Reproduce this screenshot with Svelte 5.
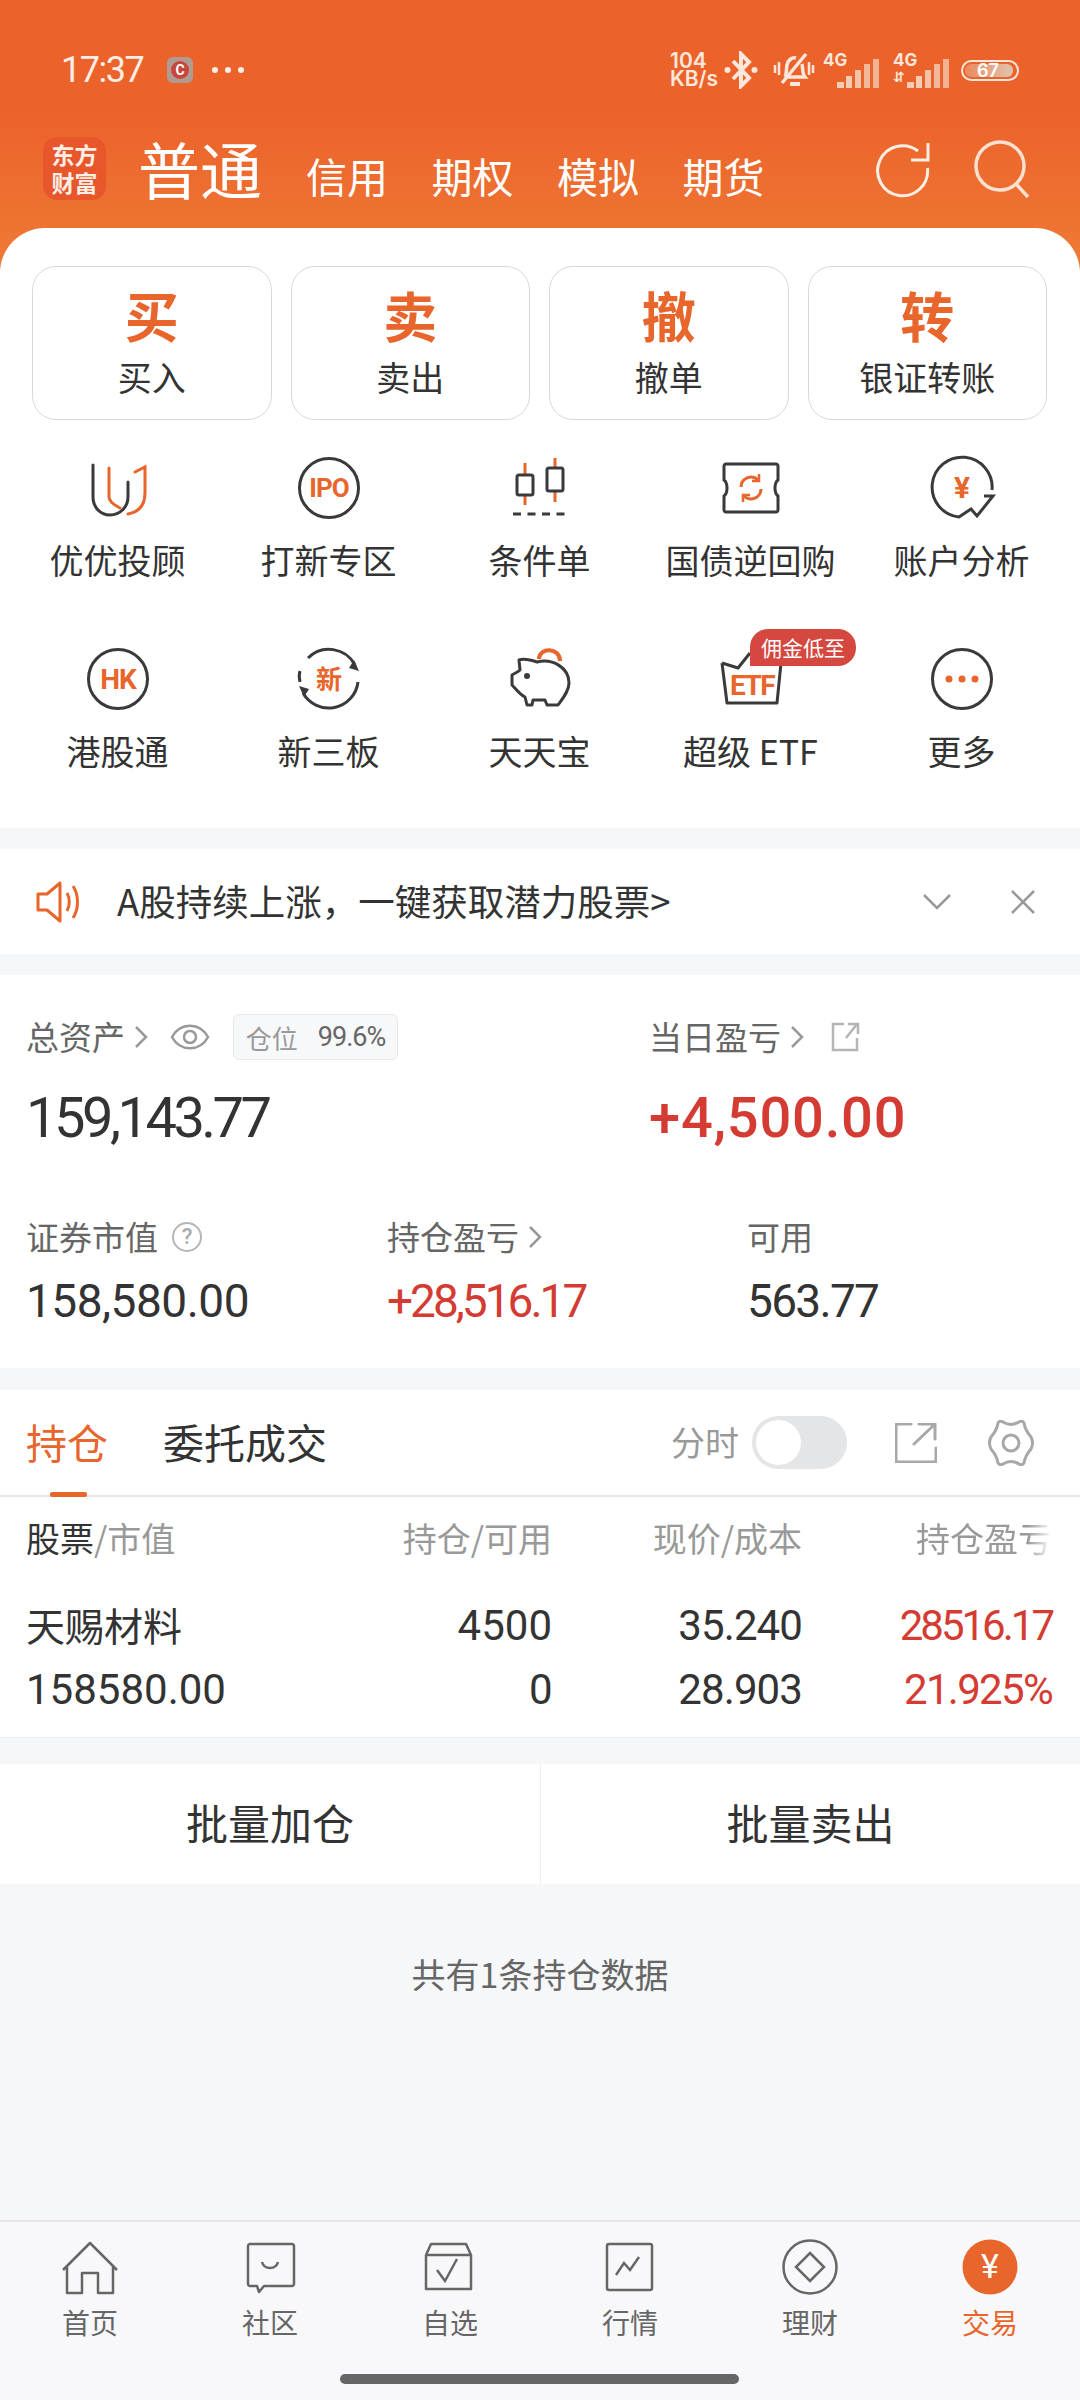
<script>
    const trades = [
        { char: "买", label: "买入" },
        { char: "卖", label: "卖出" },
        { char: "撤", label: "撤单" },
        { char: "转", label: "银证转账" },
    ];
    const tabs = ["信用", "期权", "模拟", "期货"];
    const navs = ["首页", "社区", "自选", "行情", "理财", "交易"];
</script>

<div class="page">
    <div class="top">
        <div class="status">
            <span class="time">17:37</span>
            <span class="app-c"><span>C</span></span>
            <span class="dots"><i></i><i></i><i></i></span>
            <span class="spacer"></span>
            <span class="speed">104<br />KB/s</span>
            <svg class="st-bt" width="34" height="38" viewBox="0 0 34 38" fill="none" stroke="#fde6da" stroke-width="4">
                <path d="M9 10 25 27 17 35V3l8 8L9 28" />
                <circle cx="3.5" cy="19" r="3" fill="#fde6da" stroke="none" />
                <circle cx="30.5" cy="19" r="3" fill="#fde6da" stroke="none" />
            </svg>
            <svg class="st-bell" width="42" height="38" viewBox="0 0 42 38" fill="none" stroke="#fde6da" stroke-width="3.500">
                <path d="M12 26c2-3 1-8 2-12 1-5 5-8 9-7M29 13c1 4 0 9 3 13H12" />
                <path d="M9 32 33 3" />
                <path d="M17 33h10" stroke-width="4" />
                <path d="M2 14v8M6 11v13M36 11v13M40 14v8" stroke-width="2.500" />
            </svg>
            <span class="sig">
                <span class="g4">4G</span>
                <svg width="42" height="30" viewBox="0 0 42 30" fill="#f5cdb5">
                    <rect x="0" y="23" width="7" height="6" /><rect x="9" y="17" width="6" height="12" /><rect x="18" y="11" width="6" height="18" opacity=".9" /><rect x="27" y="5" width="6" height="24" opacity=".8" /><rect x="36" y="0" width="6" height="29" opacity=".75" />
                </svg>
            </span>
            <span class="sig sig2">
                <span class="g4">4G</span>
                <span class="arrows">⇵</span>
                <svg width="42" height="30" viewBox="0 0 42 30" fill="#f5cdb5">
                    <rect x="0" y="23" width="7" height="6" /><rect x="9" y="17" width="6" height="12" /><rect x="18" y="11" width="6" height="18" opacity=".9" /><rect x="27" y="5" width="6" height="24" opacity=".8" /><rect x="36" y="0" width="6" height="29" opacity=".75" />
                </svg>
            </span>
            <span class="battery"><span class="fill"></span><span class="pct">67</span></span>
        </div>

        <div class="title">
            <div class="logo">东方<br />财富</div>
            <span class="main-tab">普通</span>
            {#each tabs as tab}
                <span class="sub-tab">{tab}</span>
            {/each}
            <span class="spacer"></span>
            <svg class="refresh" width="60" height="60" viewBox="0 0 60 60" fill="none" stroke="#fdeee5" stroke-width="3">
                <path d="M46 13A25 25 0 1 0 55.500 30" />
                <path d="M56 5V22H39" />
            </svg>
            <svg class="search" width="65" height="65" viewBox="0 0 65 65" fill="none" stroke="#fde0cf" stroke-width="3.500">
                <circle cx="30" cy="30" r="24" />
                <path d="M46 48 58 61" />
            </svg>
        </div>

        <div class="card">
            <div class="trades">
                {#each trades as t}
                    <div class="trade">
                        <span class="trade-char">{t.char}</span>
                        <span class="trade-label">{t.label}</span>
                    </div>
                {/each}
            </div>

            <div class="grid">
                <div class="cell">
                    <svg width="70" height="70" viewBox="0 0 70 70" fill="none" stroke="#3a3a3a" stroke-width="3" stroke-linecap="round">
                        <path d="M10 12V44C10 54 17 62 27 62S45 54 45 44V29" />
                        <path d="M26 15V44C26 48 31 52 37 55" stroke="#e8652b" />
                        <path d="M45 61C56 59 62 52 62 40V14L52 19" stroke="#e8652b" />
                    </svg>
                    <span>优优投顾</span>
                </div>
                <div class="cell">
                    <svg width="70" height="70" viewBox="0 0 70 70" fill="none" stroke="#3a3a3a" stroke-width="3">
                        <circle cx="35" cy="35" r="29.500" />
                        <text x="35" y="44" class="ic-text ic-ipo">IPO</text>
                    </svg>
                    <span>打新专区</span>
                </div>
                <div class="cell">
                    <svg width="70" height="70" viewBox="0 0 70 70" fill="none" stroke="#3a3a3a" stroke-width="3">
                        <path d="M20 10V22M20 42V52M50 5V15M50 38V49" stroke="#e8652b" />
                        <rect x="12" y="22" width="16" height="20" rx="2" />
                        <rect x="42" y="15" width="16" height="23" rx="2" />
                        <path d="M8 61H62" stroke-dasharray="8 6.500" />
                    </svg>
                    <span>条件单</span>
                </div>
                <div class="cell">
                    <svg width="70" height="70" viewBox="0 0 70 70" fill="none" stroke="#3a3a3a" stroke-width="3">
                        <path d="M10 11H60C61 11 62 12 62 13V27C58 30 58 40 62 43V57C62 58 61 59 60 59H10C9 59 8 58 8 57V43C12 40 12 30 8 27V13C8 12 9 11 10 11Z" />
                        <path d="M25 34A10 10 0 0 1 42 27M45 36A10 10 0 0 1 28 43" stroke="#e8652b" />
                        <path d="M36 28H43V21M34 42H27V49" stroke="#e8652b" stroke-width="2.500" />
                    </svg>
                    <span>国债逆回购</span>
                </div>
                <div class="cell">
                    <svg width="70" height="70" viewBox="0 0 70 70" fill="none" stroke="#3a3a3a" stroke-width="3">
                        <path d="M65 37A30 30 0 1 0 32 64L44 56 50 63 66 43H57" />
                        <text x="35" y="45" class="ic-text ic-yen">¥</text>
                    </svg>
                    <span>账户分析</span>
                </div>
                <div class="cell">
                    <svg width="70" height="70" viewBox="0 0 70 70" fill="none" stroke="#3a3a3a" stroke-width="3">
                        <circle cx="35" cy="35" r="29.500" />
                        <text x="35" y="45" class="ic-text ic-hk">HK</text>
                    </svg>
                    <span>港股通</span>
                </div>
                <div class="cell">
                    <svg width="70" height="70" viewBox="0 0 70 70" fill="none" stroke="#3a3a3a" stroke-width="3">
                        <path d="M14 14A29.500 29.500 0 0 1 61 21" />
                        <path d="M64 38A29.500 29.500 0 0 1 9 49" />
                        <path d="M6 27C5 30 5 34 6 38" />
                        <path d="M65 27 60 16 55 24Z" fill="#3a3a3a" stroke="none" />
                        <path d="M5 42 10 53 15 45Z" fill="#3a3a3a" stroke="none" />
                        <text x="35" y="45" class="ic-text ic-xin">新</text>
                    </svg>
                    <span>新三板</span>
                </div>
                <div class="cell">
                    <svg width="70" height="70" viewBox="0 0 70 70" fill="none" stroke="#3a3a3a" stroke-width="3" stroke-linejoin="round">
                        <path d="M34 15C34 3 55 3 55 17" stroke="#e8652b" stroke-width="4" />
                        <path d="M14 16C20 14 26 16 32 18C48 14 64 24 64 39C64 47 58 54 53 61H42L40 56H28L27 61H22L20 53C14 50 11 45 7 41V31C10 29 13 28 15 26Z" />
                        <circle cx="22" cy="32" r="3" fill="#3a3a3a" stroke="none" />
                    </svg>
                    <span>天天宝</span>
                </div>
                <div class="cell">
                    <svg width="70" height="70" viewBox="0 0 70 70" fill="none" stroke="#3a3a3a" stroke-width="3">
                        <path d="M6 19 11 59H61L65 19M6 19 22 24 34 9" stroke-linejoin="round" />
                        <text x="36" y="51" class="ic-text ic-etf">ETF</text>
                    </svg>
                    <span>超级 ETF</span>
                    <span class="badge">佣金低至</span>
                </div>
                <div class="cell">
                    <svg width="70" height="70" viewBox="0 0 70 70" fill="none" stroke="#3a3a3a" stroke-width="3">
                        <circle cx="35" cy="35" r="29.500" />
                        <circle cx="22" cy="35" r="3.500" fill="#e8652b" stroke="none" />
                        <circle cx="35" cy="35" r="3.500" fill="#e8652b" stroke="none" />
                        <circle cx="48" cy="35" r="3.500" fill="#e8652b" stroke="none" />
                    </svg>
                    <span>更多</span>
                </div>
            </div>
        </div>
    </div>

    <div class="notice">
        <svg width="46" height="44" viewBox="0 0 46 44" fill="none" stroke="#e8652b" stroke-width="3">
            <path d="M2 14H11L24 3V41L11 30H2Z" stroke-linejoin="round" />
            <path d="M31 13C34 18 34 26 31 31M37 6C43 15 43 29 37 38" />
        </svg>
        <span class="notice-text">A股持续上涨，一键获取潜力股票&gt;</span>
        <svg class="n-down" width="30" height="18" viewBox="0 0 30 18" fill="none" stroke="#999" stroke-width="2.500">
            <path d="M2 2 15 15 28 2" />
        </svg>
        <svg class="n-close" width="26" height="26" viewBox="0 0 26 26" fill="none" stroke="#999" stroke-width="2.500">
            <path d="M2 2 24 24M24 2 2 24" />
        </svg>
    </div>

    <div class="assets">
        <div class="row-a">
            <div>
                <div class="lbl">
                    <span>总资产</span>
                    <svg class="chev" width="14" height="24" viewBox="0 0 14 24" fill="none" stroke="#999" stroke-width="2.500"><path d="M2 2 12 12 2 22" /></svg>
                    <svg class="eye" width="40" height="28" viewBox="0 0 40 28" fill="none" stroke="#999" stroke-width="2.500">
                        <path d="M2 14C10 -1 30 -1 38 14 30 29 10 29 2 14Z" />
                        <circle cx="20" cy="14" r="6" />
                    </svg>
                    <span class="tag"><span>仓位</span><b>99.6%</b></span>
                </div>
                <div class="big num">159,143.77</div>
            </div>
            <div>
                <div class="lbl">
                    <span>当日盈亏</span>
                    <svg class="chev" width="14" height="24" viewBox="0 0 14 24" fill="none" stroke="#999" stroke-width="2.500"><path d="M2 2 12 12 2 22" /></svg>
                    <svg class="share" width="30" height="30" viewBox="0 0 30 30" fill="none" stroke="#b5b5b5" stroke-width="2.500">
                        <path d="M14 2H3V28H27V16M16 16 27 2M18 2H28V12" />
                    </svg>
                </div>
                <div class="big num red">+4,500.00</div>
            </div>
        </div>
        <div class="row-b">
            <div>
                <div class="lbl">
                    <span>证券市值</span>
                    <span class="q">?</span>
                </div>
                <div class="mid num t0">158,580.00</div>
            </div>
            <div>
                <div class="lbl">
                    <span>持仓盈亏</span>
                    <svg class="chev" width="14" height="24" viewBox="0 0 14 24" fill="none" stroke="#999" stroke-width="2.500"><path d="M2 2 12 12 2 22" /></svg>
                </div>
                <div class="mid num red t3">+28,516.17</div>
            </div>
            <div>
                <div class="lbl"><span>可用</span></div>
                <div class="mid num t2">563.77</div>
            </div>
        </div>
    </div>

    <div class="holdings">
        <div class="tabs">
            <span class="tab on">持仓</span>
            <span class="tab">委托成交</span>
            <span class="spacer"></span>
            <span class="fenshi">分时</span>
            <span class="toggle"><i></i></span>
            <svg class="t-share" width="42" height="40" viewBox="0 0 42 40" fill="none" stroke="#a8a8a8" stroke-width="3" stroke-linecap="round" stroke-linejoin="round">
                <path d="M16 1H1V39H41V25M19 21 39 2M24 1H40V16" />
            </svg>
            <svg class="t-gear" width="50" height="46" viewBox="0 0 50 46" fill="none" stroke="#a8a8a8" stroke-width="3">
                <path d="M17 2Q25 7 33 2Q36 0 38 3Q39 10 45 17Q48 23 45 29Q39 36 38 43Q36 46 33 44Q25 39 17 44Q14 46 12 43Q11 36 5 29Q2 23 5 17Q11 10 12 3Q14 0 17 2Z" />
                <circle cx="25" cy="23" r="8" />
            </svg>
        </div>
        <div class="table">
            <div class="thead">
                <span><em>股票</em>/市值</span>
                <span class="r">持仓/可用</span>
                <span class="r">现价/成本</span>
                <span class="r fade">持仓盈亏</span>
            </div>
            <div class="tr">
                <span class="name">天赐材料</span>
                <span class="r num">4500</span>
                <span class="r num t1">35.240</span>
                <span class="r num red t3">28516.17</span>
            </div>
            <div class="tr">
                <span class="num">158580.00</span>
                <span class="r num t0">0</span>
                <span class="r num t1">28.903</span>
                <span class="r num red t2">21.925%</span>
            </div>
        </div>
    </div>

    <div class="actions">
        <div>批量加仓</div>
        <div>批量卖出</div>
    </div>

    <div class="empty">共有1条持仓数据</div>

    <div class="nav">
        <div class="nav-row">
            {#each navs as label, i}
                <div class="nav-item" class:active={i === 5}>
                    <svg width="60" height="60" viewBox="0 0 60 60" fill="none" stroke="#666" stroke-width="2.500">
                        {#if i === 0}
                            <path d="M3 33 30 6 57 33M7 30V56H22V36H38V56H53V30" stroke-linejoin="round" />
                        {:else if i === 1}
                            <path d="M8 9C8 8 9 7 10 7H52C53 7 54 8 54 9V47C54 48 53 49 52 49H24L19 55 17 49H10C9 49 8 48 8 47Z" stroke-linejoin="round" />
                            <path d="M22 25C24 33 36 33 38 25" />
                        {:else if i === 2}
                            <path d="M6 18 11 7H46L51 18M6 18H51V52H6Z" stroke-linejoin="round" />
                            <path d="M17 33 25 44 37 22" />
                        {:else if i === 3}
                            <rect x="7" y="7" width="45" height="46" rx="2" />
                            <path d="M16 38 24 26 30 33 39 20" />
                        {:else if i === 4}
                            <circle cx="30" cy="30" r="26.500" />
                            <path d="M30 16 44 30 30 44 16 30Z" />
                        {:else}
                            <circle cx="30" cy="30" r="27.500" fill="#e8652b" stroke="none" />
                            <text x="30" y="41" class="nav-yen">¥</text>
                        {/if}
                    </svg>
                    <span>{label}</span>
                </div>
            {/each}
        </div>
        <div class="home-bar"></div>
    </div>
</div>

<style>
    :global(body) {
        margin: 0;
        background: #f6f7f9;
    }
    .page {
        width: 1080px;
        height: 2400px;
        display: flex;
        flex-direction: column;
        overflow: hidden;
        font-family: "Noto Sans CJK SC", "Noto Sans", sans-serif;
        color: #333;
        background: #f6f7f9;
    }
    .spacer {
        flex: 1;
    }
    .top {
        background: linear-gradient(#ec622b 0, #ec622b 110px, #ef7a35 270px);
    }

    /* status bar */
    .status {
        height: 76px;
        padding: 32px 61px 0 61px;
        display: flex;
        align-items: center;
        color: #fdeee5;
    }
    .time {
        font-family: Roboto, sans-serif;
        font-size: 36px;
        letter-spacing: -1.5px;
        width: 106px;
    }
    .app-c {
        width: 26px;
        height: 26px;
        border-radius: 6px;
        background: #b19a90;
        display: flex;
        align-items: center;
        justify-content: center;
    }
    .app-c span {
        width: 18px;
        height: 18px;
        border-radius: 50%;
        background: #c9453c;
        color: #fff;
        font: 700 14px/18px Roboto, sans-serif;
        text-align: center;
    }
    .dots {
        display: flex;
        gap: 7px;
        margin-left: 19px;
    }
    .dots i {
        width: 6px;
        height: 6px;
        border-radius: 50%;
        background: #fdeee5;
    }
    .speed {
        font: 600 21px/18px Inter, sans-serif;
        color: #fde6da;
        text-align: left;
        width: 54px;
    }
    .st-bell {
        margin-left: 15px;
    }
    .sig {
        position: relative;
        margin-left: 8px;
        width: 56px;
        height: 36px;
    }
    .sig svg {
        position: absolute;
        right: 0;
        top: 7px;
    }
    .sig2 {
        margin-left: 14px;
    }
    .g4 {
        position: absolute;
        left: 0;
        top: -2px;
        font: 700 17px/20px Inter, sans-serif;
        color: #fde6da;
        z-index: 1;
    }
    .arrows {
        position: absolute;
        left: 0;
        top: 16px;
        font: 700 14px/18px "DejaVu Sans", sans-serif;
        color: #fde6da;
    }
    .battery {
        position: relative;
        margin-left: 12px;
        width: 58px;
        height: 21px;
        border: 2px solid #fde6da;
        border-radius: 11px;
        box-sizing: border-box;
        overflow: hidden;
    }
    .fill {
        position: absolute;
        left: 2px;
        top: 2px;
        bottom: 2px;
        width: 48px;
        border-radius: 6px;
        background: linear-gradient(90deg, #ec8a5c, #e0c3ae);
    }
    .pct {
        position: absolute;
        left: 14px;
        top: -1px;
        font: 600 18px/19px Inter, sans-serif;
        color: #fff;
    }

    /* title row */
    .title {
        height: 120px;
        padding: 0 50px 0 43px;
        display: flex;
        align-items: center;
    }
    .logo {
        width: 63px;
        height: 63px;
        border-radius: 14px;
        background: #e8562b;
        color: #fdeee5;
        font-size: 23px;
        font-weight: 700;
        line-height: 28px;
        text-align: center;
        display: flex;
        align-items: center;
        justify-content: center;
        margin-right: 32px;
    }
    .main-tab {
        color: #fff;
        font-size: 62px;
        line-height: 60px;
        margin-right: 44px;
    }
    .sub-tab {
        color: #fff;
        font-size: 41px;
        line-height: 40px;
        margin-right: 43.500px;
        padding-top: 14px;
    }
    .refresh {
        margin-right: 38px;
    }
    .search {
        margin-right: -5px;
    }

    /* white card */
    .card {
        background: #fff;
        border-radius: 45px 45px 0 0;
        height: 600px;
        box-sizing: border-box;
        padding-top: 38px;
    }
    .trades {
        display: grid;
        grid-template-columns: repeat(4, 239.500px);
        gap: 19px;
        padding-left: 32px;
    }
    .trade {
        height: 154px;
        box-sizing: border-box;
        border: 1.5px solid #d8d8d8;
        border-radius: 24px;
        display: flex;
        flex-direction: column;
        align-items: center;
        padding-top: 14px;
    }
    .trade-char {
        color: #e8652b;
        font-size: 54px;
        line-height: 68px;
        font-weight: 700;
    }
    .trade-label {
        font-size: 34px;
        line-height: 44px;
        margin-top: 6px;
    }
    .grid {
        display: grid;
        grid-template-columns: repeat(5, 211px);
        row-gap: 64px;
        padding: 33px 0 0 12px;
    }
    .cell {
        position: relative;
        display: flex;
        flex-direction: column;
        align-items: center;
        font-size: 34px;
        line-height: 40px;
    }
    .cell svg {
        margin-bottom: 17px;
    }
    .ic-text {
        fill: #e8652b;
        stroke: none;
        text-anchor: middle;
        font-family: Roboto, "Noto Sans CJK SC", sans-serif;
        font-weight: 700;
    }
    .ic-ipo {
        font-size: 26px;
        letter-spacing: -1px;
    }
    .ic-yen {
        font-size: 30px;
    }
    .ic-hk {
        font-size: 28px;
        letter-spacing: -1px;
    }
    .ic-xin {
        font-size: 26px;
        font-family: "Noto Sans CJK SC", sans-serif;
    }
    .ic-etf {
        font-size: 28px;
        letter-spacing: -1.5px;
    }
    .badge {
        position: absolute;
        left: 105px;
        top: -15px;
        width: 106px;
        height: 37px;
        border-radius: 18px 18px 18px 0;
        background: #d5483f;
        color: #fff;
        font-size: 21px;
        line-height: 37px;
        text-align: center;
    }

    /* notice */
    .notice {
        margin-top: 21px;
        height: 105px;
        background: #fff;
        display: flex;
        align-items: center;
        padding: 0 44px 0 36px;
    }
    .notice-text {
        margin-left: 35px;
        font-size: 36.500px;
        flex: 1;
        margin-bottom: 3px;
    }
    .n-close {
        margin-left: 58px;
    }

    /* assets */
    .assets {
        margin-top: 21px;
        height: 393px;
        box-sizing: border-box;
        background: #fff;
        padding: 40px 0 0 26px;
    }
    .row-a {
        display: grid;
        grid-template-columns: 623px 1fr;
    }
    .row-b {
        display: grid;
        grid-template-columns: 361px 360px 1fr;
        margin-top: 62px;
    }
    .lbl {
        display: flex;
        align-items: center;
        height: 44px;
        font-size: 33px;
        color: #666;
    }
    .lbl > span:first-child {
        margin-bottom: 3px;
    }
    .chev {
        margin-left: 9px;
    }
    .eye {
        margin-left: 22px;
    }
    .share {
        margin-left: 26px;
    }
    .tag {
        margin-left: 23px;
        width: 165px;
        height: 46px;
        box-sizing: border-box;
        border: 1px solid #e8e8e8;
        border-radius: 6px;
        background: #f7f8fa;
        display: flex;
        align-items: center;
        justify-content: center;
        gap: 20px;
        font-size: 26px;
        color: #999;
    }
    .tag b {
        font-weight: 400;
        color: #666;
        font-family: Roboto, sans-serif;
        font-size: 27px;
        letter-spacing: -1px;
    }
    .q {
        margin-left: 14px;
        width: 30px;
        height: 30px;
        box-sizing: border-box;
        border: 2.5px solid #b5b5b5;
        border-radius: 50%;
        color: #aaa;
        font: 500 22px/25px Roboto, sans-serif;
        text-align: center;
    }
    .num {
        font-family: Roboto, "Noto Sans", sans-serif;
    }
    .red {
        color: #d43c33;
    }
    .t0 {
        letter-spacing: -0.5px;
    }
    .t1 {
        letter-spacing: -0.9px;
    }
    .t2 {
        letter-spacing: -1.7px;
    }
    .t3 {
        letter-spacing: -3px;
    }
    .big {
        margin-top: 24px;
        font-size: 56px;
        line-height: 70px;
        letter-spacing: -3.500px;
        color: #333;
    }
    .big.red {
        letter-spacing: 0.8px;
        font-weight: 500;
        color: #d43c33;
    }
    .mid {
        margin-top: 12px;
        font-size: 46px;
        line-height: 60px;
    }

    /* holdings */
    .holdings {
        margin-top: 22px;
        background: #fff;
        border-bottom: 1px solid #ececec;
    }
    .tabs {
        position: relative;
        height: 105px;
        display: flex;
        align-items: center;
        padding-left: 26px;
        border-bottom: 2px solid #e6e6e6;
    }
    .tab {
        font-size: 41px;
        margin-right: 55px;
        margin-bottom: 4px;
    }
    .tab.on {
        color: #e8652b;
    }
    .tab.on::after {
        content: "";
        position: absolute;
        left: 50px;
        bottom: -2px;
        width: 37px;
        height: 5px;
        border-radius: 2px;
        background: #e8652b;
    }
    .fenshi {
        font-size: 34px;
        color: #999;
        margin-bottom: 2px;
    }
    .toggle {
        margin-left: 13px;
        width: 95px;
        height: 53px;
        box-sizing: border-box;
        padding: 4px;
        border-radius: 27px;
        background: #e4e5e7;
    }
    .toggle i {
        display: block;
        width: 45px;
        height: 45px;
        border-radius: 50%;
        background: #fff;
    }
    .t-share {
        margin-left: 48px;
    }
    .t-gear {
        margin: 0 44px 0 49px;
    }
    .thead,
    .tr {
        display: grid;
        grid-template-columns: 276px 250px 250px 250px;
        padding-left: 26px;
        align-items: center;
    }
    .thead {
        height: 82px;
        font-size: 34px;
        color: #999;
    }
    .thead span {
        margin-bottom: 2px;
    }
    .thead em {
        font-style: normal;
        color: #333;
    }
    .r {
        text-align: right;
    }
    .fade {
        -webkit-mask-image: linear-gradient(90deg, #000 82%, transparent 100%);
        mask-image: linear-gradient(90deg, #000 82%, transparent 100%);
        justify-self: end;
    }
    .tr {
        height: 64px;
        font-size: 42px;
    }
    .table {
        padding-bottom: 16px;
    }
    .tr:nth-child(2) {
        margin-top: 14px;
    }
    .name {
        font-size: 39px;
        margin-bottom: 3px;
    }

    .actions {
        margin-top: 26px;
        height: 120px;
        display: grid;
        grid-template-columns: 1fr 1fr;
        background: #fff;
        font-size: 42px;
        text-align: center;
        line-height: 116px;
    }
    .actions div + div {
        border-left: 1px solid #eee;
    }
    .empty {
        flex: 1;
        padding-top: 70px;
        text-align: center;
        font-size: 34px;
        line-height: 40px;
        color: #666;
    }

    /* bottom nav */
    .nav {
        height: 180px;
        box-sizing: border-box;
        border-top: 2px solid #e6e6ea;
        background: #f8f8fa;
        padding-top: 15px;
    }
    .nav-row {
        display: grid;
        grid-template-columns: repeat(6, 180px);
    }
    .nav-item {
        display: flex;
        flex-direction: column;
        align-items: center;
        font-size: 28px;
        line-height: 40px;
        color: #666;
    }
    .nav-item svg {
        margin-bottom: 5px;
    }
    .nav-item.active {
        color: #e8652b;
    }
    .nav-yen {
        fill: #fff;
        stroke: none;
        text-anchor: middle;
        font-family: Roboto, sans-serif;
        font-size: 34px;
    }
    .home-bar {
        margin: 32px 0 0 340px;
        width: 399px;
        height: 10px;
        border-radius: 5px;
        background: #666;
    }
</style>
